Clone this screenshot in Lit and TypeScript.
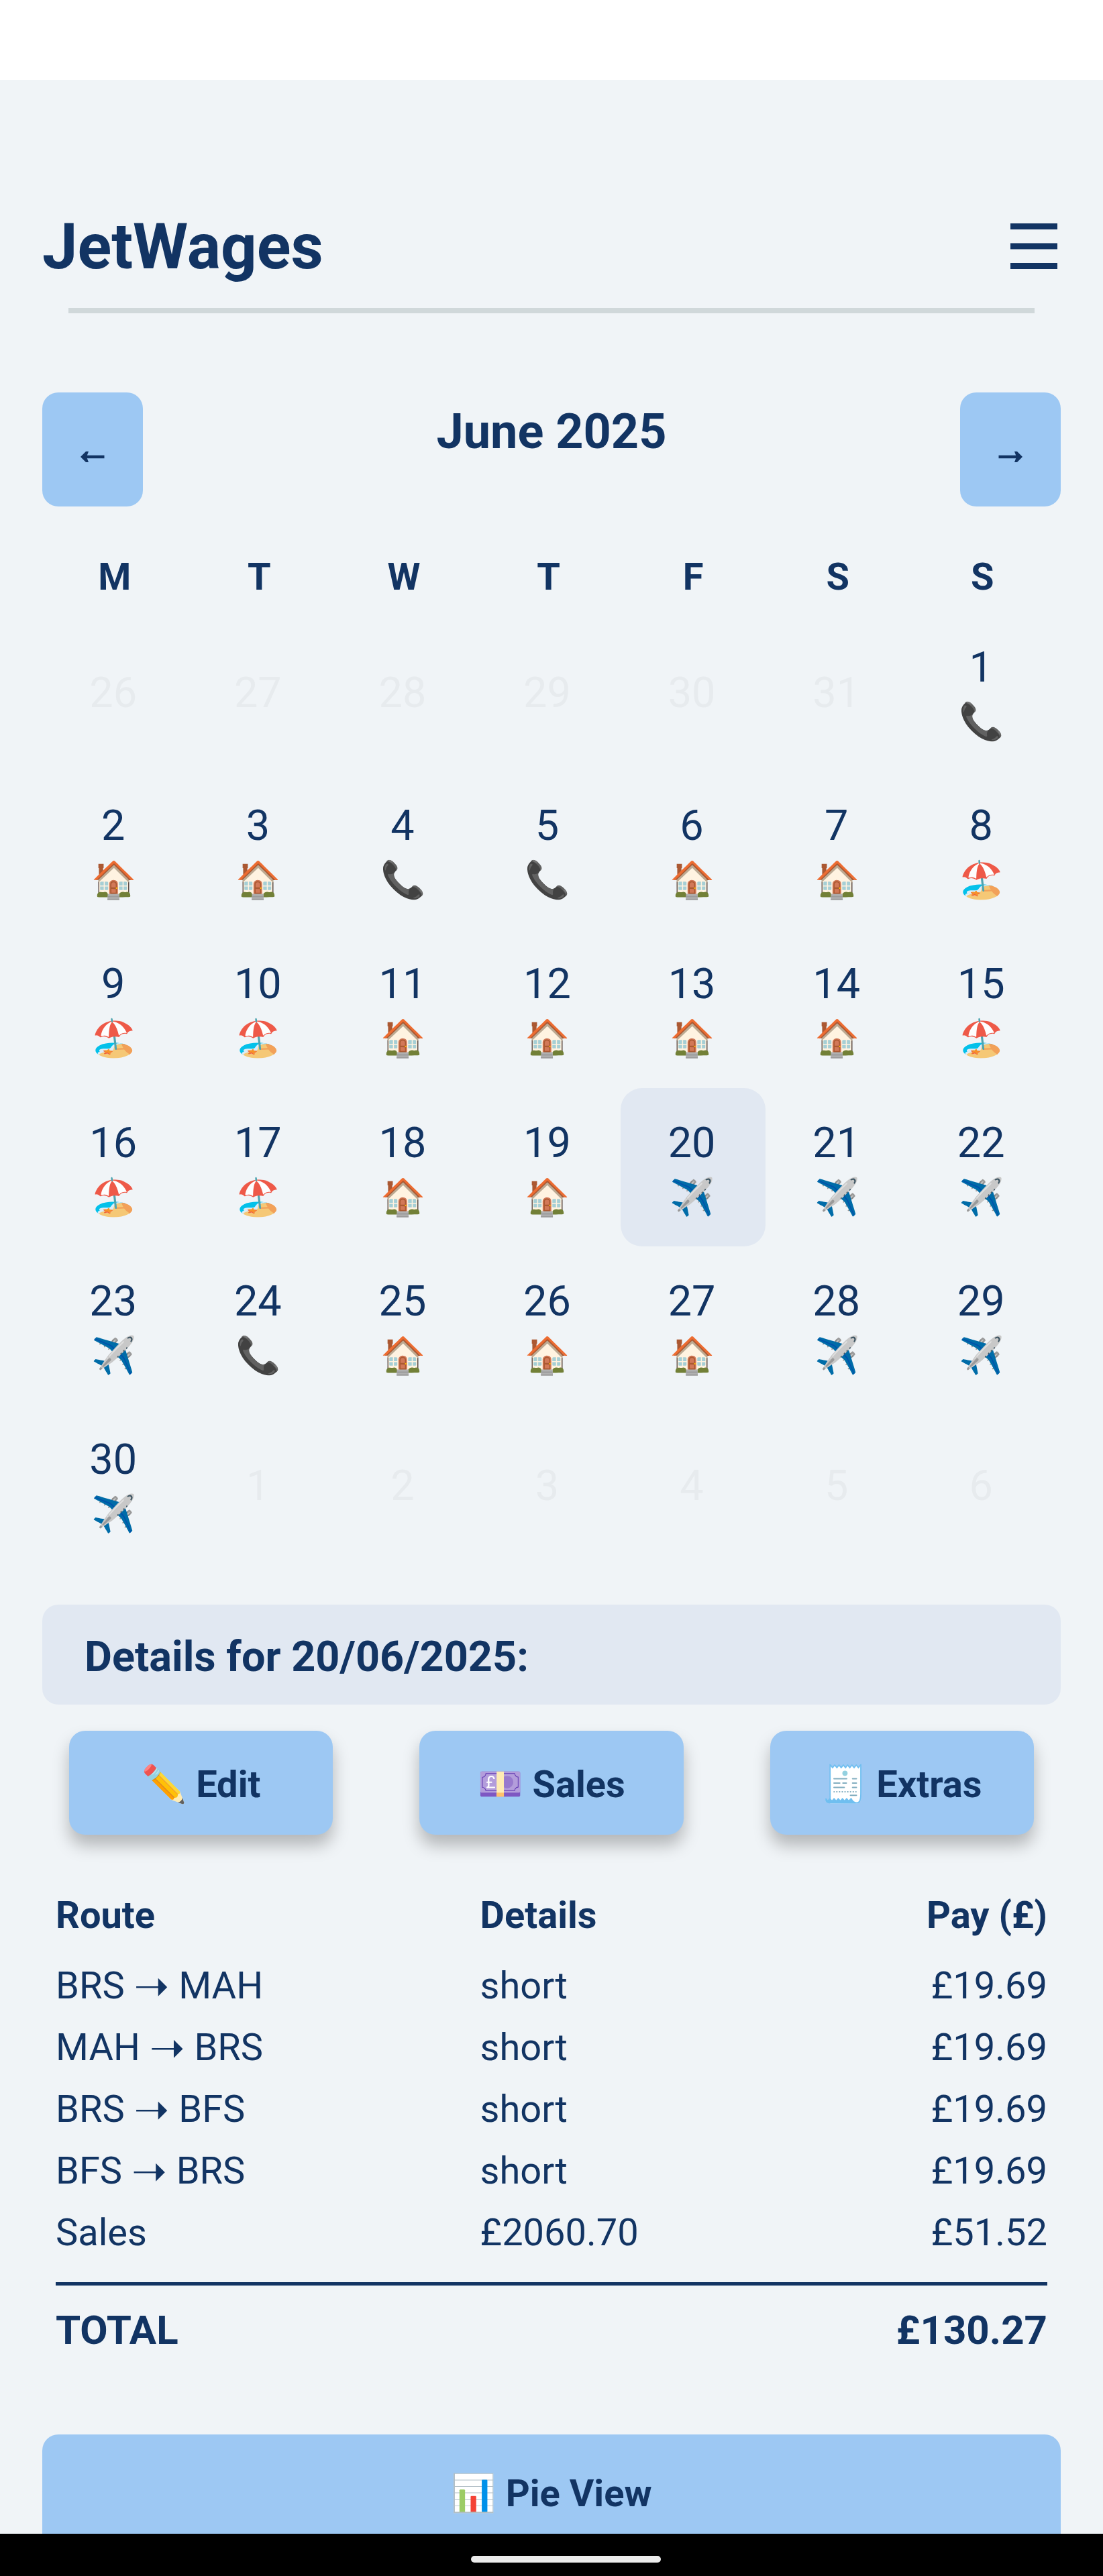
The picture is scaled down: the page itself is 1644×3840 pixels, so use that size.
import { LitElement, html, css, nothing } from "lit";
import { customElement, property, state } from "lit/decorators.js";
import { classMap } from "lit/directives/class-map.js";

type Duty = "home" | "call" | "leave" | "fly";

interface Day {
  date: number;
  duty?: Duty;
}

interface PayRow {
  route: string[];
  details: string;
  pay: string;
}

const GLYPHS: Record<Duty, [string, string]> = {
  home: ["🏠", "Day off"],
  call: ["📞", "Standby"],
  leave: ["🏖️", "Leave"],
  fly: ["✈️", "Flight"],
};

const DUTIES: Duty[] = [
  "call",
  "home", "home", "call", "call", "home", "home", "leave",
  "leave", "leave", "home", "home", "home", "home", "leave",
  "leave", "leave", "home", "home", "fly", "fly", "fly",
  "fly", "call", "home", "home", "home", "fly", "fly",
  "fly",
];

const DAYS: Day[] = [
  ...[26, 27, 28, 29, 30, 31].map((date) => ({ date })),
  ...DUTIES.map((duty, i) => ({ date: i + 1, duty })),
  ...[1, 2, 3, 4, 5, 6].map((date) => ({ date })),
];

const ROWS: PayRow[] = [
  { route: ["BRS", "MAH"], details: "short", pay: "£19.69" },
  { route: ["MAH", "BRS"], details: "short", pay: "£19.69" },
  { route: ["BRS", "BFS"], details: "short", pay: "£19.69" },
  { route: ["BFS", "BRS"], details: "short", pay: "£19.69" },
  { route: ["Sales"], details: "£2060.70", pay: "£51.52" },
];

const base = css`
  * {
    box-sizing: border-box;
  }
  button {
    margin: 0;
    border: 0;
    padding: 0;
    background: none;
    color: inherit;
    font: inherit;
    cursor: pointer;
  }
`;

@customElement("duty-calendar")
export class DutyCalendar extends LitElement {
  @property({ type: Number }) selected = 20;

  static styles = [
    base,
    css`
      :host {
        display: block;
      }
      .bar {
        display: flex;
        justify-content: space-between;
        align-items: flex-start;
      }
      .step {
        display: flex;
        align-items: center;
        justify-content: center;
        width: 150px;
        height: 170px;
        padding-top: 22px;
        border-radius: 24px;
        background: #9dc8f3;
      }
      .month {
        margin: 17px 0 0;
        font-size: 72px;
        line-height: 84px;
        font-weight: 700;
      }
      .week,
      .grid {
        display: grid;
        grid-template-columns: repeat(7, 1fr);
        margin-right: 9px;
      }
      .week {
        margin-top: 73px;
        font-size: 56px;
        line-height: 64px;
        font-weight: 700;
        text-align: center;
      }
      .grid {
        grid-template-rows: repeat(6, 1fr);
        height: 1418px;
        margin-top: 21px;
      }
      .day {
        display: flex;
        flex-direction: column;
        align-items: center;
        justify-content: center;
        gap: 13px;
        padding: 1px 4px 0 0;
        border-radius: 32px;
        font-size: 63px;
        line-height: 74px;
      }
      .day.selected {
        background: #e1e8f2;
      }
      .day.outside {
        padding-top: 4px;
        color: #e7ebee;
      }
      .duty {
        height: 61px;
        padding-left: 2px;
        font-size: 54px;
        line-height: 61px;
      }
    `,
  ];

  private pick(day: Day) {
    this.dispatchEvent(new CustomEvent("pick", { detail: day.date }));
  }

  render() {
    return html`
      <div class="bar">
        <button class="step" aria-label="Previous month">
          <svg width="36" height="18" viewBox="0 0 36 18" aria-hidden="true">
            <path d="M6 9H35.500" stroke="currentColor" stroke-width="4.500" />
            <path d="M0 9L8 1H12L9 9L12 17H8Z" fill="currentColor" />
          </svg>
        </button>
        <h2 class="month">June 2025</h2>
        <button class="step" aria-label="Next month">
          <svg width="36" height="18" viewBox="0 0 36 18" aria-hidden="true">
            <path d="M.5 9H30" stroke="currentColor" stroke-width="4.500" />
            <path d="M36 9L28 1H24L27 9L24 17H28Z" fill="currentColor" />
          </svg>
        </button>
      </div>
      <div class="week">
        ${["M", "T", "W", "T", "F", "S", "S"].map((d) => html`<span>${d}</span>`)}
      </div>
      <div class="grid">
        ${DAYS.map(
          (day) => html`<button
            class=${classMap({
              day: true,
              outside: !day.duty,
              selected: !!day.duty && day.date === this.selected,
            })}
            ?disabled=${!day.duty}
            @click=${() => this.pick(day)}
          >
            <span>${day.date}</span>
            ${day.duty
              ? html`<span class="duty" role="img" aria-label=${GLYPHS[day.duty][1]}>${GLYPHS[day.duty][0]}</span>`
              : nothing}
          </button>`
        )}
      </div>
    `;
  }
}

@customElement("pay-table")
export class PayTable extends LitElement {
  static styles = [
    base,
    css`
      :host {
        display: block;
        margin: 88px 20px 0;
      }
      .pay {
        width: 100%;
        table-layout: fixed;
        border-collapse: separate;
        border-spacing: 0;
        font-size: 56px;
        line-height: 64px;
        text-align: left;
      }
      .pay th,
      .pay td {
        padding: 14px 0;
      }
      .pay .heads th {
        padding: 0 0 27px;
      }
      .route {
        width: 42.8%;
      }
      .pay .amount {
        text-align: right;
      }
      .arrow {
        font-family: "DejaVu Sans", sans-serif;
        font-size: 63px;
        line-height: 0;
        vertical-align: -3px;
      }
      .pay .last td {
        padding-bottom: 42px;
      }
      .pay .total th,
      .pay .total td {
        border-top: 5px solid #123463;
        padding: 32px 0 0;
        font-size: 60px;
        line-height: 70px;
        font-weight: 700;
      }
    `,
  ];

  render() {
    return html`
      <table class="pay">
        <thead>
          <tr class="heads">
            <th class="route" scope="col">Route</th>
            <th scope="col">Details</th>
            <th class="amount" scope="col">Pay (£)</th>
          </tr>
        </thead>
        <tbody>
          ${ROWS.map(
            (r, i) => html`<tr class=${i === ROWS.length - 1 ? "last" : ""}>
              <td>${r.route[0]}${r.route[1] ? html` <span class="arrow">➝</span> ${r.route[1]}` : nothing}</td>
              <td>${r.details}</td>
              <td class="amount">${r.pay}</td>
            </tr>`
          )}
        </tbody>
        <tfoot>
          <tr class="total">
            <th scope="row" colspan="2">TOTAL</th>
            <td class="amount">£130.27</td>
          </tr>
        </tfoot>
      </table>
    `;
  }
}

@customElement("app-root")
export class AppRoot extends LitElement {
  @state() private selected = 20;

  static styles = [
    base,
    css`
      :host {
        display: flex;
        flex-direction: column;
        height: 100vh;
        background: #f0f4f7;
        color: #123463;
        font-family: Roboto, "Noto Color Emoji", sans-serif;
      }
      .status {
        flex: none;
        height: 119px;
        background: #fff;
      }
      .page {
        flex: 1;
        min-height: 0;
        overflow-y: auto;
        scrollbar-width: none;
        padding: 193px 63px 0;
      }
      .top {
        display: flex;
        align-items: center;
        justify-content: space-between;
        padding-right: 5px;
      }
      .brand {
        margin: 0;
        font-size: 94px;
        line-height: 112px;
        font-weight: 700;
      }
      .menu {
        display: flex;
        padding-bottom: 2px;
      }
      .rule {
        height: 8px;
        margin: 35px 39px 118px;
        border: 0;
        background: #d0d8da;
      }
      .heading {
        margin: 61px 0 0;
        padding: 41px 63px 34px;
        border-radius: 24px;
        background: #e1e8f2;
        font-size: 63px;
        line-height: 74px;
        font-weight: 700;
      }
      .actions {
        display: grid;
        grid-template-columns: repeat(3, 1fr);
        gap: 129px;
        margin: 39px 40px 0;
      }
      .action,
      .pie {
        display: flex;
        justify-content: center;
        gap: 14px;
        border-radius: 24px;
        background: #9dc8f3;
        font-size: 56px;
        line-height: 64px;
        font-weight: 700;
      }
      .action {
        padding: 48px 0 43px;
        box-shadow: 0 16px 24px rgba(0, 0, 0, 0.25);
      }
      .pie {
        width: 100%;
        margin-top: 120px;
        padding: 56px 0;
      }
      .glyph {
        font-size: 54px;
      }
      .gesture {
        flex: none;
        display: flex;
        align-items: center;
        justify-content: center;
        height: 63px;
        padding: 12px 0 0 43px;
        background: #000;
      }
      .pill {
        width: 283px;
        height: 10px;
        border-radius: 5px;
        background: #ebebeb;
      }
    `,
  ];

  render() {
    const day = String(this.selected).padStart(2, "0");
    return html`
      <div class="status"></div>
      <main class="page">
        <header class="top">
          <h1 class="brand">JetWages</h1>
          <button class="menu" aria-label="Menu">
            <svg width="70" height="68" viewBox="0 0 70 68" aria-hidden="true">
              <path d="M0 4.500H70M0 34H70M0 63.500H70" stroke="currentColor" stroke-width="9" />
            </svg>
          </button>
        </header>
        <hr class="rule" />
        <duty-calendar
          .selected=${this.selected}
          @pick=${(e: CustomEvent<number>) => (this.selected = e.detail)}
        ></duty-calendar>
        <h3 class="heading">Details for ${day}/06/2025:</h3>
        <div class="actions">
          <button class="action"><span class="glyph">✏️</span>Edit</button>
          <button class="action"><span class="glyph">💷</span>Sales</button>
          <button class="action"><span class="glyph">🧾</span>Extras</button>
        </div>
        <pay-table></pay-table>
        <button class="pie"><span class="glyph">📊</span>Pie View</button>
      </main>
      <footer class="gesture"><div class="pill"></div></footer>
    `;
  }
}
